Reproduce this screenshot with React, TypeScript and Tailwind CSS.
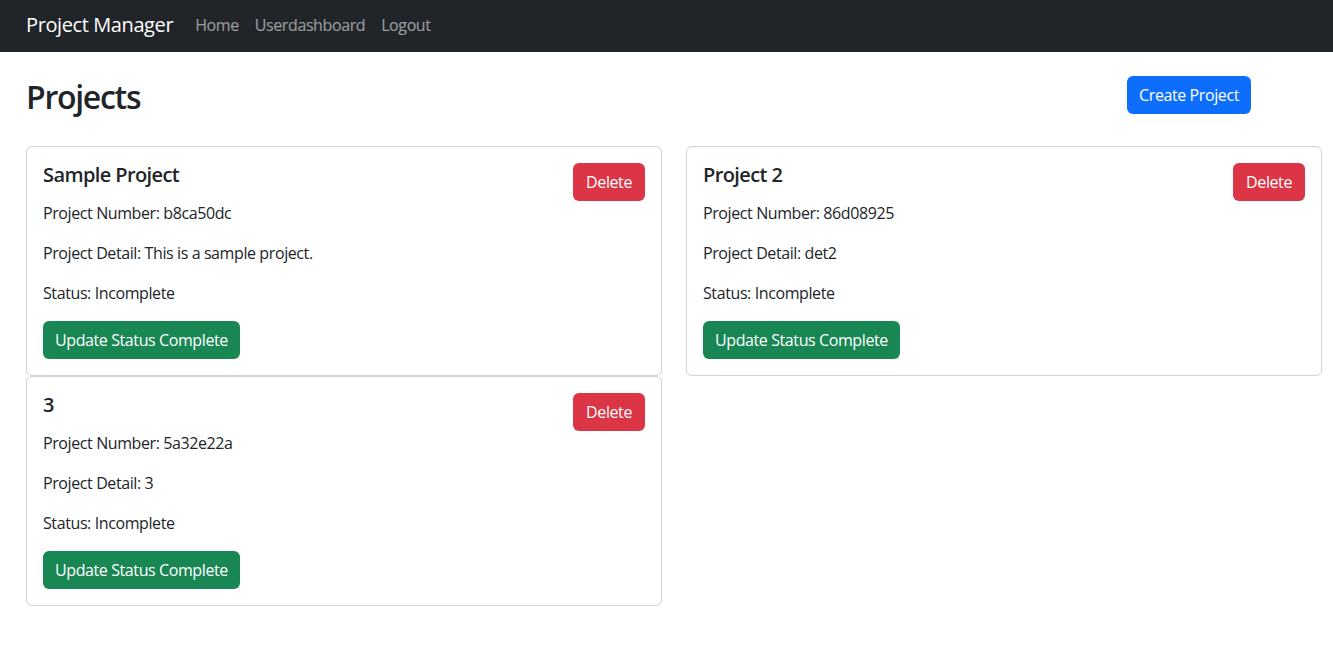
const projects = [
  { name: "Sample Project", number: "b8ca50dc", detail: "This is a sample project.", status: "Incomplete" },
  { name: "Project 2", number: "86d08925", detail: "det2", status: "Incomplete" },
  { name: "3", number: "5a32e22a", detail: "3", status: "Incomplete" },
];

const ProjectCard = ({ name, number, detail, status }: (typeof projects)[number]) => (
  <div className="rounded-[6px] border border-[#d3d3d4] bg-white p-4">
    <div className="flex items-start justify-between">
      <h5 className="mb-2 text-[20px] leading-[24px] font-semibold tracking-[-0.03em]">{name}</h5>
      <button className="h-[38px] rounded-[6px] bg-[#dc3545] px-[13px] text-[16px] text-white">Delete</button>
    </div>
    <p className="mb-4 leading-6">Project Number: {number}</p>
    <p className="mb-4 leading-6">Project Detail: {detail}</p>
    <p className="mb-4 leading-6">Status: {status}</p>
    <button className="h-[38px] rounded-[6px] bg-[#198754] px-3 text-[16px] text-white">Update Status Complete</button>
  </div>
);

export default function App() {
  return (
    <div
      className="min-h-screen bg-white text-[16px] tracking-[-0.025em] text-[#212529]"
      style={{ fontFamily: '"Open Sans", "Noto Sans", sans-serif' }}
    >
      <nav className="flex h-[52px] items-center bg-[#212529] px-[26px] pb-[3px]">
        <span className="mr-[14px] text-[20px] text-white">Project Manager</span>
        <div className="flex">
          {["Home", "Userdashboard", "Logout"].map((l) => (
            <a key={l} className="px-2 text-[16px] text-white/55">{l}</a>
          ))}
        </div>
      </nav>
      <div className="px-[26px] pr-[11px]">
        <div className="mt-6 mb-8 flex items-center justify-between pr-[71px]">
          <h2 className="pt-1 text-[32px] leading-[34px] font-semibold tracking-[-0.04em]">Projects</h2>
          <button className="h-[38px] rounded-[6px] bg-[#0d6efd] px-3 text-[16px] text-white">Create Project</button>
        </div>
        <div className="grid grid-cols-2 gap-x-6 items-start">
          {projects.map((p) => (
            <ProjectCard key={p.number} {...p} />
          ))}
        </div>
      </div>
    </div>
  );
}
